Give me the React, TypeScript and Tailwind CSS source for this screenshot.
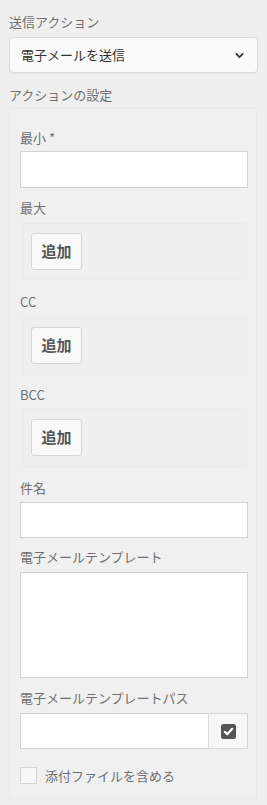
import { ChevronDown } from "lucide-react";

const font = { fontFamily: '"Noto Sans CJK JP", "Noto Sans", "Liberation Sans", sans-serif' };

function Label({ text, className = "" }: { text: string; className?: string }) {
  return <div className={`h-[20px] leading-[20px] text-[13px] text-[#6f6f6f] ${className}`}>{text}</div>;
}

function AddBox({ className = "" }: { className?: string }) {
  return (
    <div className={`ml-[2px] mr-[1px] border border-[#ebebeb] bg-[#efefef] px-[8px] ${className}`}>
      <button className="h-[37px] w-[51px] rounded-[3px] border border-[#d6d6d6] bg-[#f9f9f9] text-[15px] font-bold text-[#555]">
        追加
      </button>
    </div>
  );
}

export default function App() {
  return (
    <div className="min-h-[805px] w-[267px] bg-[#efefef] px-[9px] pt-[12px]" style={font}>
      <Label text="送信アクション" />
      <div className="mt-[5px] flex h-[36px] items-center justify-between rounded-[4px] border border-[#dcdcdc] bg-[#fafafa] pl-[11px] pr-[11px] shadow-[0_1px_1px_rgba(0,0,0,0.04)]">
        <span className="text-[13px] text-[#333]">電子メールを送信</span>
        <ChevronDown size={13} strokeWidth={3.2} color="#333" />
      </div>

      <Label text="アクションの設定" className="mt-[12px]" />

      <div className="mt-[3px] mr-[1px] border border-[#e9e9e9] bg-[#f0f0f0] pb-[12px] pl-[10px] pr-[8px] pt-[19px]">
        <Label text="最小 *" />
        <input className="mt-[3px] block h-[37px] w-full border border-[#d3d3d3] bg-white" />

        <Label text="最大" className="mt-[10px]" />
        <AddBox className="mt-[5px] py-[9px]" />

        <Label text="CC" className="mt-[12px]" />
        <AddBox className="mt-[4px] py-[10px]" />

        <Label text="BCC" className="mt-[10px]" />
        <AddBox className="mt-[3px] py-[10px]" />

        <Label text="件名" className="mt-[11px]" />
        <input className="mt-[4px] block h-[36px] w-full border border-[#d3d3d3] bg-white" />

        <Label text="電子メールテンプレート" className="mt-[9px]" />
        <textarea className="mt-[5px] block h-[106px] w-full resize-none border border-[#d3d3d3] bg-white" />

        <Label text="電子メールテンプレートパス" className="mt-[10px]" />
        <div className="mt-[5px] flex h-[36px] border border-[#d3d3d3]">
          <input className="block h-full min-w-0 flex-1 bg-white" />
          <div className="flex w-[39px] items-center justify-center border-l border-[#dcdcdc] bg-[#f7f7f7]">
            <svg width="15" height="15" viewBox="0 0 15 15">
              <rect x="0" y="0" width="15" height="15" rx="2.5" fill="#555" />
              <path d="M3.8 7.8 L6.3 10.2 L11.2 4.8" fill="none" stroke="#fff" strokeWidth="2.2" strokeLinecap="round" strokeLinejoin="round" />
            </svg>
          </div>
        </div>

        <div className="mt-[17px] flex items-center">
          <div className="h-[17px] w-[17px] border border-[#d3d3d3] bg-[#f7f7f7]" />
          <span className="ml-[8px] text-[13px] text-[#6f6f6f]">添付ファイルを含める</span>
        </div>
      </div>
    </div>
  );
}
